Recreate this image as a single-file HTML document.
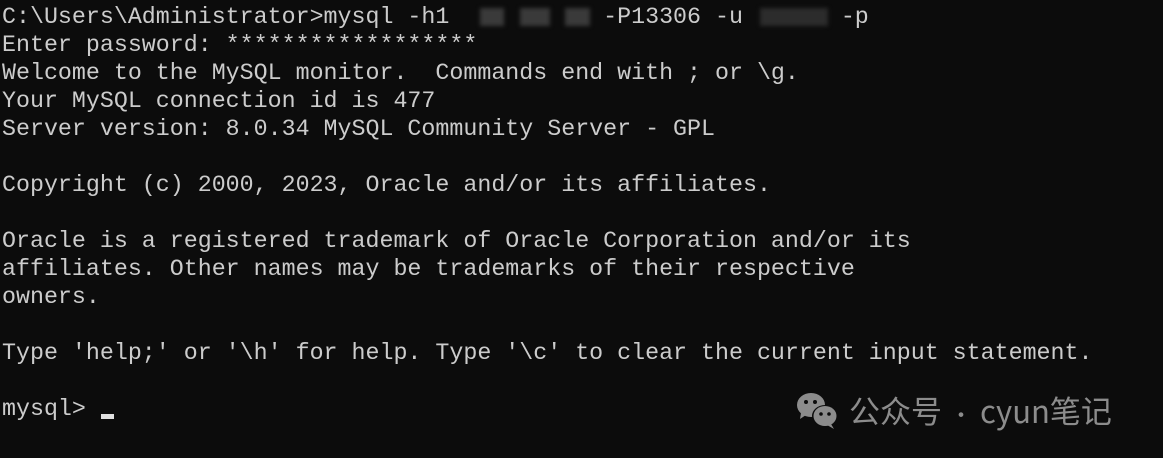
<!DOCTYPE html>
<html><head><meta charset="utf-8"><style>
html,body{margin:0;padding:0;background:#0c0c0c;width:1163px;height:458px;overflow:hidden}
pre{position:absolute;left:2px;top:3px;margin:0;font-family:"Liberation Mono","DejaVu Sans Mono",monospace;font-size:23.3px;line-height:28px;color:#cccccc;letter-spacing:0}
.b{position:absolute;background:#3a3a3a;filter:blur(2px)}
.cur{position:absolute;left:101px;top:414px;width:13px;height:5px;background:#e0e0e0}
.wm{position:absolute;left:849px;top:390px;font-family:"Noto Sans CJK SC",sans-serif;font-size:31px;color:#8c8c8c;line-height:40px;white-space:nowrap}
</style></head><body>
<pre>C:\Users\Administrator&gt;mysql -h1           -P13306 -u       -p
Enter password: ******************
Welcome to the MySQL monitor.  Commands end with ; or \g.
Your MySQL connection id is 477
Server version: 8.0.34 MySQL Community Server - GPL

Copyright (c) 2000, 2023, Oracle and/or its affiliates.

Oracle is a registered trademark of Oracle Corporation and/or its
affiliates. Other names may be trademarks of their respective
owners.

Type 'help;' or '\h' for help. Type '\c' to clear the current input statement.

mysql&gt; </pre>
<div class="b" style="left:480px;top:8px;width:24px;height:18px"></div>
<div class="b" style="left:520px;top:8px;width:30px;height:18px"></div>
<div class="b" style="left:565px;top:8px;width:25px;height:18px"></div>
<div class="b" style="left:760px;top:8px;width:68px;height:18px;background:#2c2c2c"></div>
<div class="cur"></div>
<svg style="position:absolute;left:795px;top:392px" width="46" height="38" viewBox="0 0 46 38">
<ellipse cx="16" cy="13" rx="14" ry="12" fill="#8c8c8c"/>
<path d="M6 21 L5 27 L11 23Z" fill="#8c8c8c"/>
<ellipse cx="30" cy="24" rx="13" ry="11" fill="#0c0c0c"/>
<ellipse cx="30" cy="24" rx="11.5" ry="10" fill="#8c8c8c"/>
<path d="M36 32 L39 37 L32 33Z" fill="#8c8c8c"/>
<circle cx="11" cy="10" r="2" fill="#0c0c0c"/><circle cx="20" cy="10" r="2" fill="#0c0c0c"/>
<circle cx="26" cy="22" r="1.8" fill="#0c0c0c"/><circle cx="34" cy="22" r="1.8" fill="#0c0c0c"/>
</svg>
<div class="wm">公众号<span style="font-size:22px;margin:0 8px">·</span>cyun笔记</div>
</body></html>
